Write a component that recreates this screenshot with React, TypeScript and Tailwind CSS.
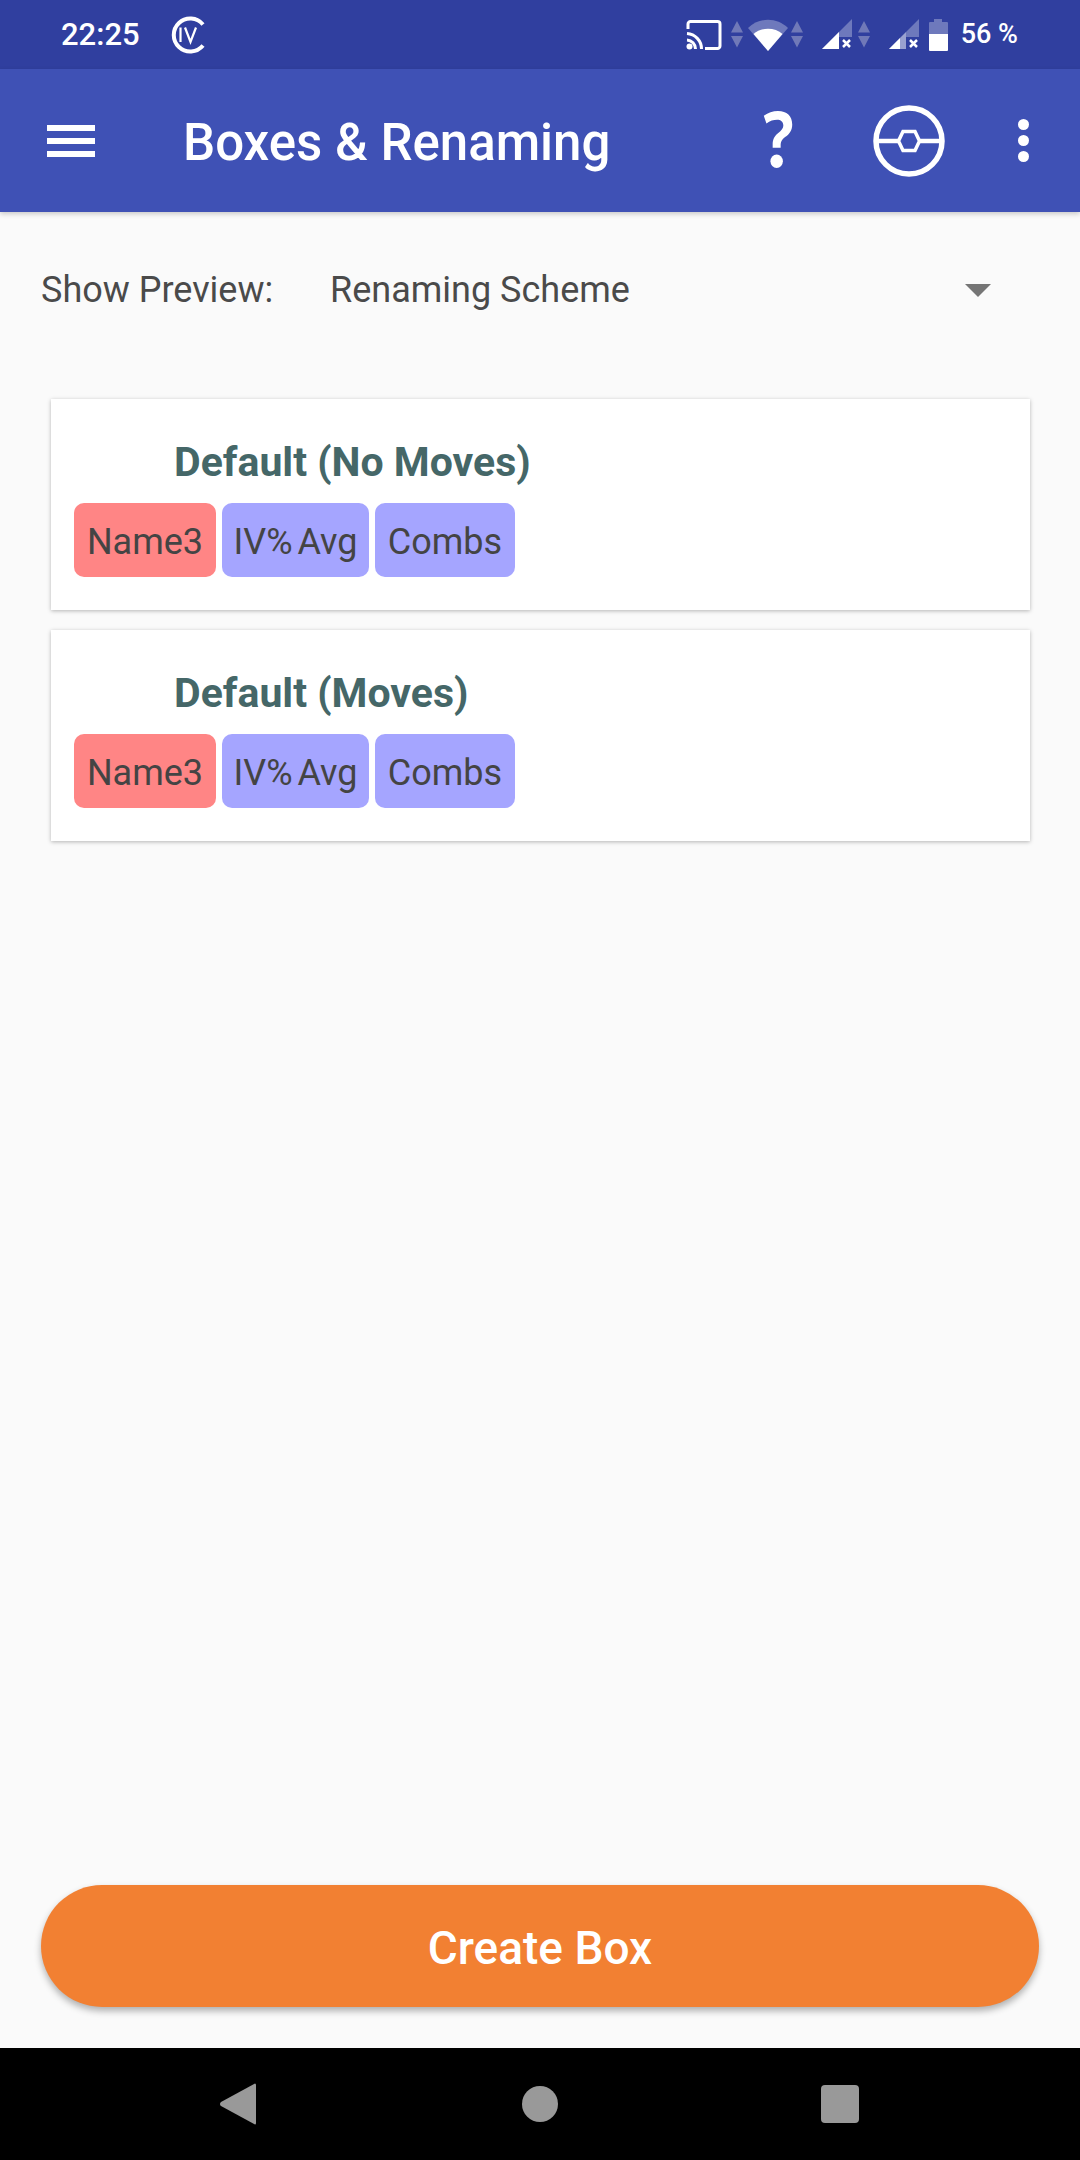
const Arrows = () => (
  <svg width="12" height="27" viewBox="0 0 12 27" fill="#7079b8">
    <path d="M6 0l6 11.500H0zM0 15h12L6 26.500z" />
  </svg>
);

const Chip = ({ label, color }: { label: string; color: string }) => (
  <div className={`flex h-[74px] items-center justify-center rounded-[10px] pt-[3px] ${color}`}>
    <span className="text-[36px] leading-none text-[#444444] [word-spacing:-4px]">{label}</span>
  </div>
);

const Card = ({ title }: { title: string }) => (
  <div className="h-[211px] w-[979px] bg-white pt-[41px] pl-[23px] shadow-[0_1px_4px_rgba(0,0,0,0.28)]">
    <div className="pl-[100px] text-[41px] leading-[44px] font-bold text-[#456768]">{title}</div>
    <div className="mt-[19px] flex gap-[6px]">
      <div className="w-[142px]"><Chip label="Name3" color="bg-[#ff8585]" /></div>
      <div className="w-[147px]"><Chip label="IV% Avg" color="bg-[#a5a5ff]" /></div>
      <div className="w-[140px]"><Chip label="Combs" color="bg-[#a5a5ff]" /></div>
    </div>
  </div>
);

export default function App() {
  return (
    <div className="flex h-[2160px] w-[1080px] flex-col overflow-hidden bg-[#fafafa] font-['Roboto',sans-serif]">
      <div className="flex h-[69px] items-center justify-between bg-[#303f9f] pr-[62px] pl-[61px] text-white">
        <div className="flex items-center">
          <span className="w-[109px] text-[31px] leading-none font-medium">22:25</span>
          <svg width="35" height="38" viewBox="0 0 35 38" fill="none" stroke="#fff">
            <path d="M33 8.500A16.500 16.500 0 1 0 33 29.500" strokeWidth="4" />
            <path d="M10.500 11.500v14.500" strokeWidth="2.200" />
            <path d="M15 11.500l5.500 14.500 5.500-14.500" strokeWidth="2.200" />
          </svg>
        </div>
        <div className="flex items-center">
          <svg width="36" height="30" viewBox="0 0 36 30" fill="none" stroke="#fff" strokeWidth="3">
            <path d="M2 9V4a2.500 2.500 0 0 1 2.500-2.500h27A2.500 2.500 0 0 1 34 4v22a2.500 2.500 0 0 1-2.500 2.500H19" />
            <path d="M1 13.500A15.500 15.500 0 0 1 15.500 29M1 20a9 9 0 0 1 8.500 9" />
            <circle cx="3.500" cy="26.500" r="3" fill="#fff" stroke="none" />
          </svg>
          <div className="ml-[9px]"><Arrows /></div>
          <svg className="ml-[5px]" width="40" height="32" viewBox="0 0 40 32">
            <path d="M0 9C11-2 29-2 40 9L20 32z" fill="#fff" opacity="0.3" />
            <path d="M5.500 15C13 8 27 8 34.500 15L20 32z" fill="#fff" />
          </svg>
          <div className="ml-[3px]"><Arrows /></div>
          <svg className="ml-[19px]" width="31" height="32" viewBox="0 0 31 32">
            <path d="M0 30L30 0v18H17v12z" fill="#fff" opacity="0.3" />
            <path d="M0 30L17 13v17z" fill="#fff" />
            <path d="M21 21l7 7m0-7l-7 7" stroke="#fff" strokeWidth="2.500" />
          </svg>
          <div className="ml-[5px]"><Arrows /></div>
          <svg className="ml-[19px]" width="31" height="32" viewBox="0 0 31 32">
            <path d="M0 30L30 0v18H17v12z" fill="#fff" opacity="0.3" />
            <path d="M0 30L11 19v11z" fill="#fff" />
            <path d="M11 30V19l6-6v17z" fill="#fff" opacity="0.3" />
            <path d="M21 21l7 7m0-7l-7 7" stroke="#fff" strokeWidth="2.500" />
          </svg>
          <svg className="ml-[9px]" width="19" height="33" viewBox="0 0 19 33">
            <path d="M1 4h4V1h8v3h5a1 1 0 0 1 1 1v11H0V5a1 1 0 0 1 1-1z" fill="#fff" opacity="0.3" />
            <path d="M0 16h19v16a1 1 0 0 1-1 1H1a1 1 0 0 1-1-1z" fill="#fff" />
          </svg>
          <span className="ml-[13px] text-[27px] leading-none font-medium">56 %</span>
        </div>
      </div>

      <div className="relative flex h-[143px] items-center bg-[#3f51b5] text-white shadow-[0_2px_5px_rgba(0,0,0,0.2)]">
        <div className="ml-[47px] flex w-[48px] flex-col gap-[7px]">
          <div className="h-[6px] bg-white" />
          <div className="h-[6px] bg-white" />
          <div className="h-[6px] bg-white" />
        </div>
        <span className="ml-[88px] w-[579px] pt-[4px] text-[51px] leading-none font-medium">Boxes &amp; Renaming</span>
        <svg className="mt-[-2px]" width="32" height="58" viewBox="0 0 36 60" preserveAspectRatio="none" fill="#fff">
          <path d="M2 5c5-3 10-5 16-5 10 0 16 5 16 14 0 6-3 10-8 13-4 3-5 5-5 9v2H12v-3c0-6 2-9 6-12 4-3 6-5 6-8 0-4-3-6-7-6-4 0-8 1-12 4z" />
          <ellipse cx="16.500" cy="52" rx="7" ry="7" />
        </svg>
        <svg className="ml-[79px]" width="72" height="72" viewBox="0 0 72 72" fill="none" stroke="#fff" strokeWidth="5.500">
          <circle cx="36" cy="36" r="33" />
          <path d="M4 36h22M46 36h22" strokeWidth="4.500" />
          <path d="M30 26.500h12l4.500 9.500-4.500 9.500H30L25.500 36z" strokeWidth="3.500" />
        </svg>
        <div className="ml-[73px] flex flex-col gap-[5px]">
          <div className="size-[11px] rounded-full bg-white" />
          <div className="size-[11px] rounded-full bg-white" />
          <div className="size-[11px] rounded-full bg-white" />
        </div>
      </div>

      <div className="mt-[48px] flex h-[60px] items-center pr-[89px] pl-[41px] text-[36px] text-[#4a4a4a]">
        <span className="w-[289px]">Show Preview:</span>
        <span className="flex-1">Renaming Scheme</span>
        <svg width="26" height="13" viewBox="0 0 26 13" fill="#757575">
          <path d="M0 0h26L13 13z" />
        </svg>
      </div>

      <div className="mt-[79px] ml-[51px] flex flex-col gap-[20px]">
        <Card title="Default (No Moves)" />
        <Card title="Default (Moves)" />
      </div>

      <div className="flex-1" />

      <div className="mx-[41px] mb-[41px] flex h-[122px] items-center justify-center rounded-full bg-[#f28032] pt-[3px] shadow-[0_4px_7px_rgba(0,0,0,0.3)]">
        <span className="text-[46px] leading-none font-medium text-white">Create Box</span>
      </div>

      <div className="flex h-[112px] items-center bg-black pl-[220px]">
        <svg width="36" height="42" viewBox="0 0 36 42" fill="#999">
          <path d="M35 0.500Q36 0.500 36 2V40Q36 41.500 35 41.500L1 23a2.500 2.500 0 0 1 0-4z" />
        </svg>
        <div className="ml-[266px] size-[36px] rounded-full bg-[#999]" />
        <div className="ml-[263px] size-[38px] rounded-[4px] bg-[#999]" />
      </div>
    </div>
  );
}
